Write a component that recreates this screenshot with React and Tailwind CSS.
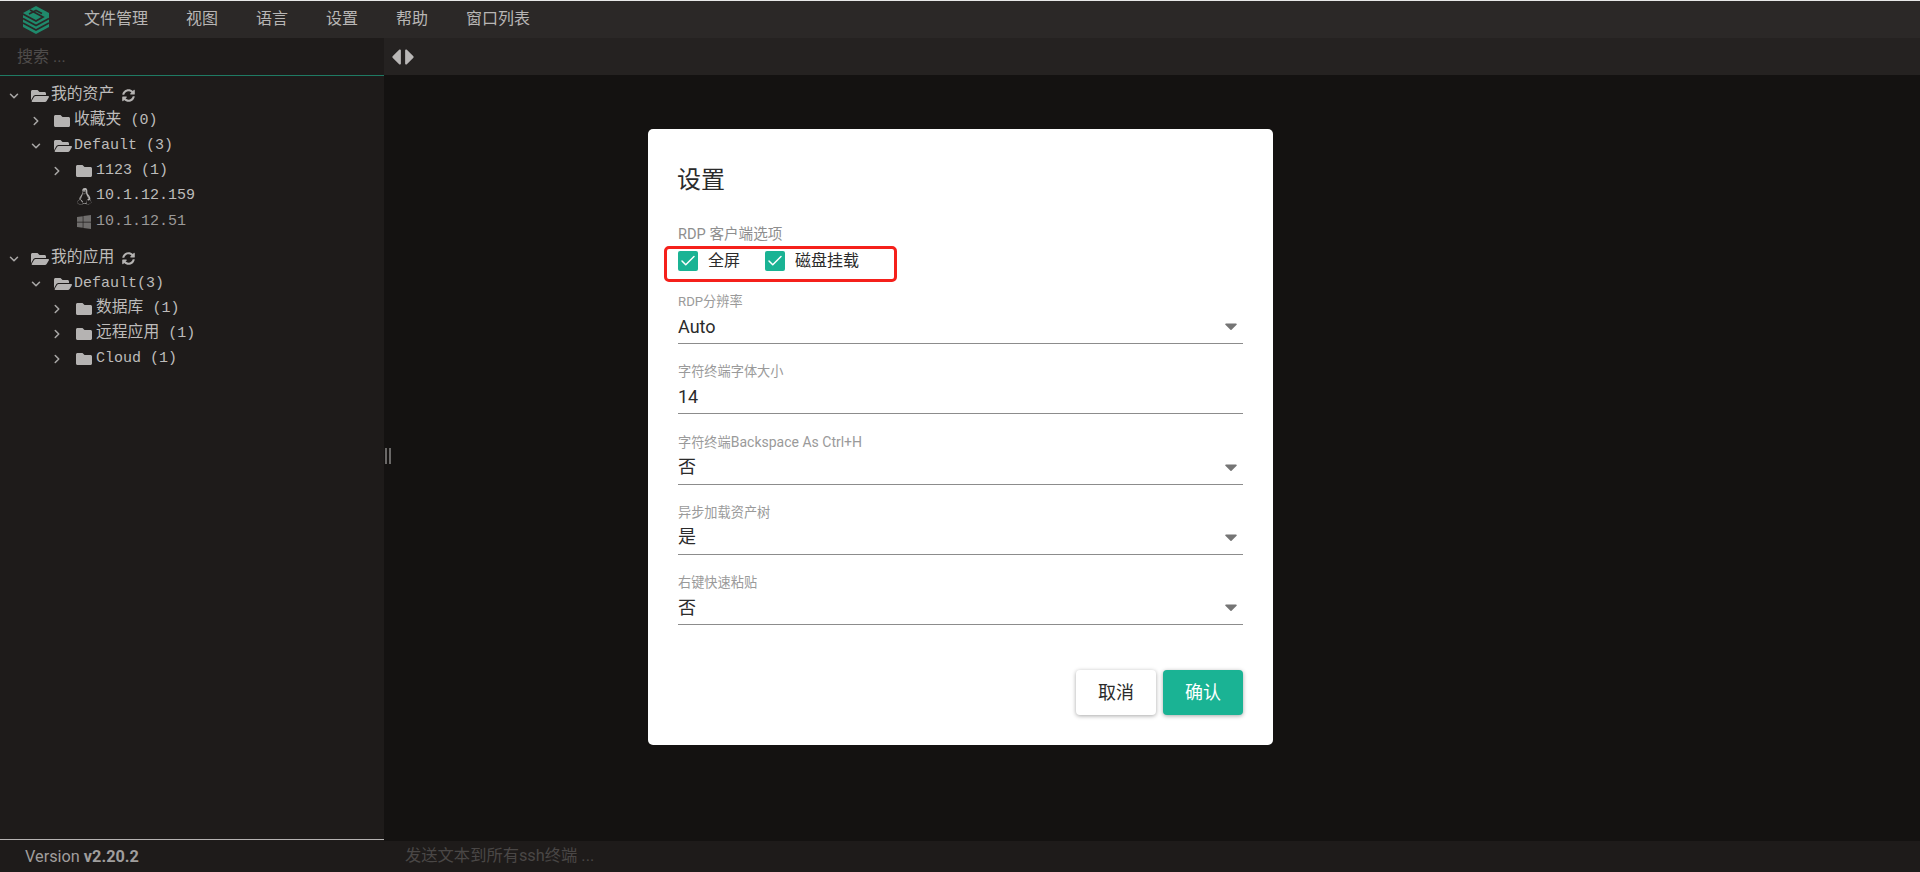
import React from 'react';
import { FaFolder, FaFolderOpen, FaSyncAlt, FaLinux, FaWindows, FaCaretLeft, FaCaretRight, FaCaretDown } from 'react-icons/fa';
import { ChevronRight, ChevronDown, Check } from 'lucide-react';

const sans = "font-['Roboto','Noto_Sans_CJK_SC',sans-serif]";
const mono = "font-['Liberation_Mono','Noto_Sans_CJK_SC',monospace]";

const menus = ['文件管理', '视图', '语言', '设置', '帮助', '窗口列表'];

const Logo = () => (
    <svg width="28" height="30" viewBox="0 0 28 30">
        <path d="M14 1 L27 8 V22 L14 29 L1 22 V8 Z" fill="#1f8a6c" />
        <g fill="none" stroke="#2b2827" strokeWidth="1.7">
            <path d="M1 13.5 L14 20.5 L27 13.5" />
            <path d="M1 18 L14 25 L27 18" />
            <path d="M0 8.5 L14 16 L21 12 L8 5" />
            <path d="M7 9 L14 5.5 L20 8.5" />
        </g>
    </svg>
);

// one tree row, level is the indent step
const TreeRow = ({ level, arrow, icon, children }) => {
    const pad = { 0: 'pl-[7px]', 1: 'pl-[29px]', 2: 'pl-[50px]' }[level];
    const gap = { 0: 'ml-[10px]', 1: 'ml-[11px]', 2: 'ml-[12px]' }[level];
    return (
        <div className={`flex items-center h-[25.2px] ${pad} text-[#bdbbba] ${mono}`}>
            <span className="w-[14px] h-[14px] flex items-center justify-center shrink-0">
                {arrow === 'down' && <ChevronDown size={14} strokeWidth={2.6} className="text-[#a9a7a6]" />}
                {arrow === 'right' && <ChevronRight size={14} strokeWidth={2.6} className="text-[#a9a7a6]" />}
            </span>
            <span className={`w-[19px] ${gap} mr-[1px] flex items-center shrink-0 text-[#b5b3b2]`}>{icon}</span>
            {children}
        </div>
    );
};

const Cn = ({ children }) => <span className="text-[15.8px]">{children}</span>;
const En = ({ children }) => <span className="text-[15px] whitespace-pre">{children}</span>;

const Open = () => <FaFolderOpen size={18} />;
const Closed = () => <FaFolder size={16} />;

const Field = ({ label, value, select }) => (
    <div className="flex flex-col border-b border-[#8c8c8c] h-[56px]">
        <div className="h-[28px] flex items-center text-[13.2px] text-[#9a9a9a]">{label}</div>
        <div className="h-[20px] flex items-center justify-between text-[18px] text-[#2b2b2b]">
            <span>{value}</span>
            {select && <FaCaretDown size={20} className="text-[#757575] mr-[2px]" />}
        </div>
    </div>
);

const CheckItem = ({ label }) => (
    <div className="flex items-center">
        <span className="w-[20px] h-[20px] bg-[#1ab394] rounded-[2px] flex items-center justify-center">
            <Check size={18} strokeWidth={2} className="text-white" />
        </span>
        <span className="ml-[10px] text-[16px] text-[#2b2b2b]">{label}</span>
    </div>
);

export default function App() {
    return (
        <div className={`h-screen w-full flex flex-col relative overflow-hidden bg-[#141211] ${sans}`}>
            {/* top menu */}
            <div className="h-[38px] shrink-0 border-t border-[#e8e8e8] bg-[#2b2827] flex items-center pl-[22px]">
                <Logo />
                <div className="flex ml-[15px] -mt-[2px] text-[16px] text-[#b8b6b5]">
                    {menus.map((m) => (
                        <span key={m} className="px-[19px]">{m}</span>
                    ))}
                </div>
            </div>

            <div className="flex-1 flex min-h-0">
                {/* left side */}
                <div className="w-[384px] shrink-0 flex flex-col bg-[#1e1b1a]">
                    <div className="h-[38px] shrink-0 border-b border-[#1f7a63] flex items-center pl-[17px] text-[16px] text-[#4f4c4b]">
                        搜索 ...
                    </div>
                    <div className="flex-1 pt-[7px]">
                        <TreeRow level={0} arrow="down" icon={<Open />}>
                            <Cn>我的资产</Cn>
                            <FaSyncAlt size={13} className="ml-[8px] text-[#b5b3b2]" />
                        </TreeRow>
                        <TreeRow level={1} arrow="right" icon={<Closed />}>
                            <Cn>收藏夹</Cn><En> (0)</En>
                        </TreeRow>
                        <TreeRow level={1} arrow="down" icon={<Open />}>
                            <En>Default (3)</En>
                        </TreeRow>
                        <TreeRow level={2} arrow="right" icon={<Closed />}>
                            <En>1123 (1)</En>
                        </TreeRow>
                        <TreeRow level={2} icon={<FaLinux size={17} />}>
                            <En>10.1.12.159</En>
                        </TreeRow>
                        <TreeRow level={2} icon={<FaWindows size={16} className="text-[#6f6d6c]" />}>
                            <span className="text-[#9b9998]"><En>10.1.12.51</En></span>
                        </TreeRow>

                        <div className="h-[12px]" />

                        <TreeRow level={0} arrow="down" icon={<Open />}>
                            <Cn>我的应用</Cn>
                            <FaSyncAlt size={13} className="ml-[8px] text-[#b5b3b2]" />
                        </TreeRow>
                        <TreeRow level={1} arrow="down" icon={<Open />}>
                            <En>Default(3)</En>
                        </TreeRow>
                        <TreeRow level={2} arrow="right" icon={<Closed />}>
                            <Cn>数据库</Cn><En> (1)</En>
                        </TreeRow>
                        <TreeRow level={2} arrow="right" icon={<Closed />}>
                            <Cn>远程应用</Cn><En> (1)</En>
                        </TreeRow>
                        <TreeRow level={2} arrow="right" icon={<Closed />}>
                            <En>Cloud (1)</En>
                        </TreeRow>
                    </div>
                    <div className="h-[33px] shrink-0 border-t border-[#b5b3b2] flex items-center pl-[25px] pt-[2px] text-[16.3px] text-[#a09e9d]">
                        Version&nbsp;<b className="font-bold">v2.20.2</b>
                    </div>
                </div>

                {/* right side */}
                <div className="flex-1 flex flex-col min-w-0">
                    <div className="h-[37px] shrink-0 bg-[#252221] flex items-center text-[#b9b7b6]">
                        <FaCaretLeft size={26} className="-ml-[1px]" />
                        <FaCaretRight size={26} className="-ml-[12px]" />
                    </div>
                    <div className="flex-1" />
                    <div className="h-[31px] shrink-0 bg-[#1e1b1a] flex items-center pl-[21px] text-[16.3px] text-[#4a4746]">
                        发送文本到所有ssh终端 ...
                    </div>
                </div>
            </div>

            {/* splitter grip */}
            <div className="absolute left-[385px] top-[448px] w-[6px] h-[16px] flex justify-between">
                <span className="w-[2px] bg-[#6a6867]" />
                <span className="w-[2px] bg-[#6a6867]" />
            </div>

            {/* settings dialog */}
            <div className="absolute left-[648px] top-[129px] w-[625px] h-[616px] bg-white rounded-[5px] px-[30px] pt-[31px]">
                <h2 className="h-[40px] -ml-[1px] flex items-center text-[24px] font-normal text-[#2b2b2b]">设置</h2>
                <div className="mt-[25px] h-[20px] flex items-center text-[14.6px] text-[#8e8e8e]">RDP 客户端选项</div>
                <div className="relative mt-[6px] h-[20px] flex gap-[25px]">
                    <CheckItem label="全屏" />
                    <CheckItem label="磁盘挂载" />
                    <div className="absolute -left-[14px] -top-[5px] w-[233px] h-[36px] border-[3px] border-[#f5201b] rounded-[5px]" />
                </div>
                <div className="mt-[17px] flex flex-col gap-[14.25px]">
                    <Field label="RDP分辨率" value="Auto" select />
                    <Field label="字符终端字体大小" value="14" />
                    <Field label={<>字符终端<span className="text-[14px]">Backspace As Ctrl+H</span></>} value="否" select />
                    <Field label="异步加载资产树" value="是" select />
                    <Field label="右键快速粘贴" value="否" select />
                </div>
                <div className="mt-[45px] flex justify-end gap-[7px]">
                    <button className="w-[80px] h-[45px] bg-white rounded-[4px] text-[18px] text-[#2b2b2b] shadow-[0_1px_4px_rgba(0,0,0,0.35)]">取消</button>
                    <button className="w-[80px] h-[45px] bg-[#1ab394] rounded-[4px] text-[18px] text-white shadow-[0_1px_4px_rgba(0,0,0,0.35)]">确认</button>
                </div>
            </div>
        </div>
    );
}
